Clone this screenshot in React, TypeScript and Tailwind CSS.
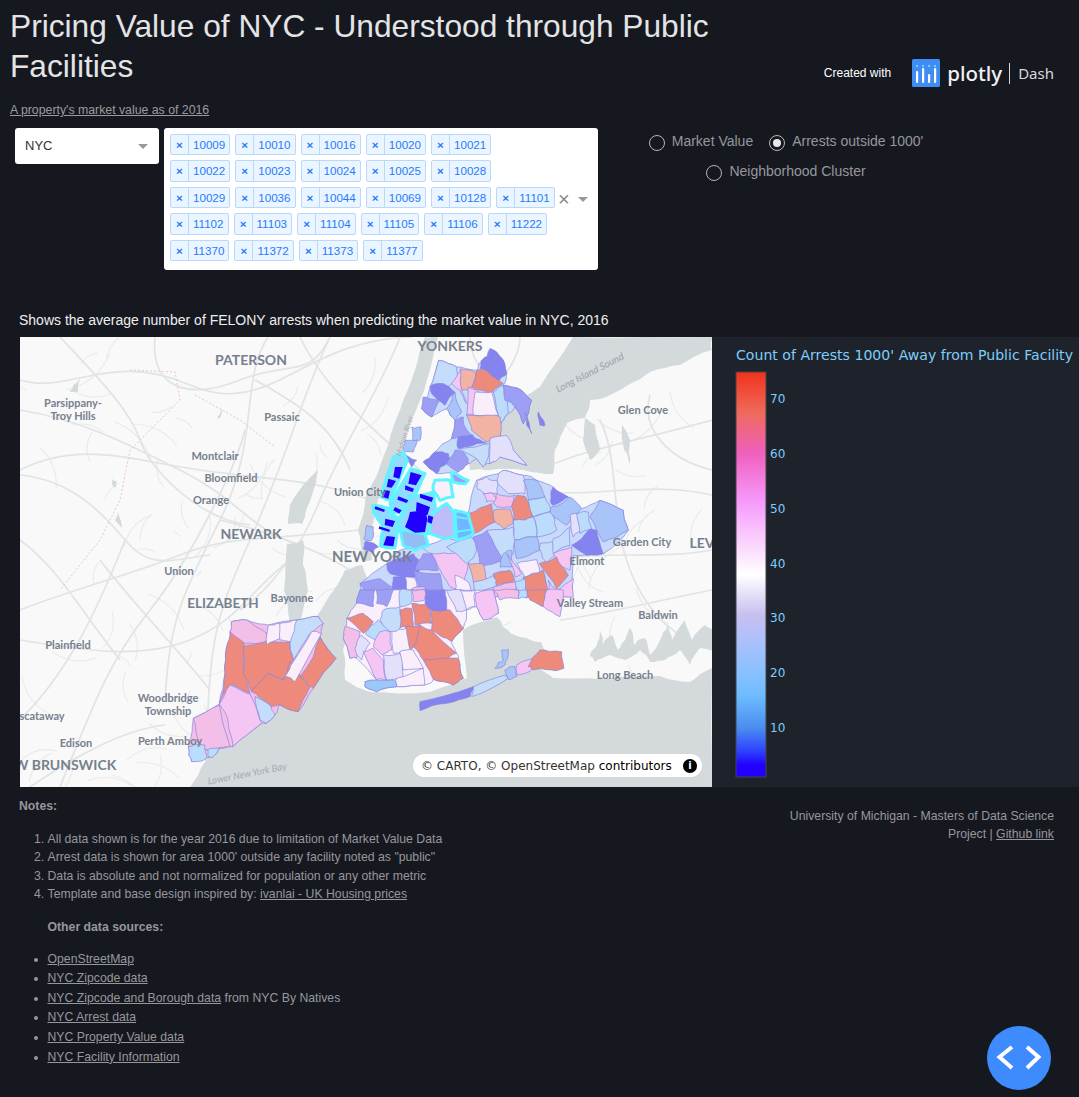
const SANS = "font-['Liberation_Sans',Arial,sans-serif]";

const chipRows = [
  ["10009", "10010", "10016", "10020", "10021"],
  ["10022", "10023", "10024", "10025", "10028"],
  ["10029", "10036", "10044", "10069", "10128", "11101"],
  ["11102", "11103", "11104", "11105", "11106", "11222"],
  ["11370", "11372", "11373", "11377"],
];

const R = "#ee8a7c";
const O = "#f2b2a4";
const P = "#f5c6f3";
const K = "#f3bfe8";
const W = "#f9eefa";
const V = "#e2e0fa";
const S = "#bcdcfb";
const L = "#c6dcfb";
const M = "#a9c4f8";
const B = "#9c9ff3";
const D = "#8583ef";
const Y = "#6fb6ff";

// zones read off the crops, in 3x coordinates
const northZones: [string, string][] = [
  [L, "296,70 350,90 410,100 425,70 450,35 482,60 500,110 490,145 545,160 575,190 550,260 525,210 505,230 480,265 480,300 520,340 560,385 480,360 450,380 430,390 410,365 385,380 355,405 290,410 250,375 285,345 335,305 345,250 320,215 275,240 245,215 270,150"],
  ["#c9d9fb", "385,530 410,430 475,410 495,400 550,415 590,430 640,450 685,480 725,515 780,490 850,520 865,580 790,650 700,655 695,780 60,780 60,740 140,680 180,640 265,625 345,600 400,590"],
  [L, "296,70 350,90 355,145 335,140 290,160 270,150"],
  [O, "362,95 408,108 395,150 365,160"],
  [P, "335,140 362,100 365,160 380,200 360,160"],
  [D, "425,70 440,60 450,35 482,60 500,110 475,135 440,100 420,95"],
  [R, "410,100 440,100 490,140 450,170 395,150"],
  [D, "270,150 310,140 345,165 315,205 275,170"],
  [B, "250,180 300,190 275,240 245,215"],
  [M, "345,165 365,225 345,250 320,215"],
  [P, "385,150 415,160 400,235 380,235"],
  [W, "405,165 455,165 475,235 400,235"],
  [S, "460,165 490,145 505,230 480,265 475,235"],
  [B, "490,145 545,160 575,190 550,260 525,210 495,190"],
  [D, "555,225 575,290 560,265"],
  [D, "595,225 615,265 600,265"],
  [O, "380,235 455,235 480,240 480,300 440,315 395,280"],
  [B, "345,250 370,240 375,270 400,295 355,300 335,305"],
  [D, "355,300 400,298 440,318 380,330 355,335"],
  [L, "360,335 450,320 445,360 430,390 410,365"],
  [V, "450,305 500,295 520,340 560,385 480,360 450,380"],
  [B, "320,370 345,340 375,350 385,380 355,405 325,385"],
  [D, "250,375 285,345 325,350 320,380 290,410"],
  [M, "215,270 243,270 240,310 220,315"],
  [M, "195,310 232,310 220,345 190,345"],
  [D, "190,345 230,370 215,390"],
  [M, "80,565 100,570 95,610 72,605"],
  [D, "78,612 115,630 100,648 70,635"],
  [V, "410,430 440,420 475,435 470,470 435,470 410,450"],
  [V, "475,410 495,400 550,415 555,470 505,470 475,440"],
  [P, "430,470 460,470 470,495 440,495"],
  [K, "470,470 525,475 515,510 470,510 460,500"],
  [R, "385,530 455,500 465,555 400,590"],
  [O, "460,520 510,515 520,560 490,575 465,555"],
  [R, "530,475 555,478 580,540 520,550 515,510"],
  [M, "550,430 590,430 615,480 565,490"],
  [S, "565,490 615,480 635,520 580,540"],
  [D, "640,450 685,480 640,505 632,490"],
  [M, "635,510 690,480 725,515 680,565 650,545 630,530"],
  [S, "580,540 630,525 645,550 650,580 590,600"],
  [S, "520,550 580,540 590,600 520,610"],
  [M, "520,610 590,600 600,640 530,665"],
  [L, "600,620 640,615 650,650 620,680 605,650"],
  [L, "640,605 690,570 690,625 640,650"],
  [V, "690,535 715,530 725,580 700,600"],
  [S, "710,530 745,525 755,575 720,590"],
  [M, "750,540 780,490 850,520 865,580 790,615"],
  [D, "695,625 745,580 770,580 790,650 740,655"],
  [P, "640,650 695,630 690,700 650,680"],
  [R, "598,680 650,660 685,715 650,755"],
  [R, "550,720 610,700 625,780 550,780"],
  [P, "625,730 650,760 700,725 700,780 630,780"],
  [B, "400,600 445,580 490,670 420,690"],
  [L, "440,580 520,570 520,650 490,670"],
  [M, "490,650 515,640 515,690 480,690"],
  [P, "270,650 395,630 385,680 370,770 330,750 290,680"],
  [L, "245,630 320,600 380,620 340,650 275,650"],
  [S, "320,630 395,600 410,640 380,680"],
  [O, "385,680 430,680 440,730 400,735"],
  [R, "460,710 510,700 525,730 470,745"],
  [P, "500,650 545,710 525,720"],
  [W, "530,680 590,668 600,705 555,720"],
  [L, "400,735 460,715 470,750 410,770"],
  [K, "460,750 530,735 530,780 460,780"],
  [S, "525,735 555,725 560,780 530,780"],
  [W, "345,715 385,735 400,780 345,780"],
  [D, "140,680 220,650 250,680 225,720 150,710"],
  [B, "60,740 120,725 170,760 170,780 90,780"],
  [D, "160,720 210,720 225,780 160,780"],
  [B, "220,700 300,710 310,760 240,780"],
  [B, "250,650 275,650 295,700 225,700"],
  [W, "195,720 225,725 230,760 200,760"],
  [K, "215,755 255,750 260,780 215,780"],
];

const southZones: [string, string][] = [
  [K, "150,125 155,95 200,90 265,105 350,90 415,80 430,100 420,140 468,205 400,295 355,365 300,345 285,375 260,400 245,400 158,470 120,475 100,500 35,515 25,470 40,385 118,342 135,250 140,170"],
  [W, "500,85 530,40 540,0 940,0 955,70 910,90 890,50 860,60 850,115 815,155 830,190 835,205 850,265 820,285 760,268 735,285 650,290 590,305 555,290 555,275 590,270 530,205 510,205 490,145"],
  [R, "150,125 190,150 190,215 210,310 150,282 118,338 135,250 140,170"],
  [R, "190,170 250,155 330,155 340,210 310,270 265,250 215,305 190,250"],
  [R, "215,305 265,250 310,270 330,215 390,290 355,365 300,345 270,350 235,320"],
  [R, "420,140 468,205 400,295 360,262 400,200"],
  [P, "150,285 210,312 245,400 158,470 145,400 118,342"],
  [K, "40,385 118,345 150,470 80,480 60,460"],
  [K, "155,95 200,90 260,130 255,155 195,160 150,125"],
  [W, "265,105 300,100 300,145 260,165"],
  [W, "300,100 350,90 355,150 330,155 300,150"],
  [L, "350,90 415,80 430,100 390,130 340,210 330,160"],
  [W, "395,125 425,130 345,275 315,260 340,215"],
  [L, "225,320 270,345 285,375 260,400 240,390"],
  [S, "25,470 75,465 80,505 35,515"],
  [S, "80,480 120,475 100,500 85,500"],
  [R, "500,85 550,70 580,95 550,130"],
  [S, "595,90 630,120 590,155 555,130"],
  [R, "660,60 695,55 700,110 655,115"],
  [R, "695,40 750,40 755,100 705,105"],
  [R, "755,60 810,60 850,115 815,155 755,120"],
  [D, "733,0 795,0 800,60 755,60 735,40"],
  [R, "675,110 720,105 725,130 690,180"],
  [R, "720,105 755,120 830,190 800,205 730,210 700,170"],
  [R, "730,210 835,205 850,265 820,285 760,268"],
  [K, "495,110 540,125 530,205 510,205 490,145"],
  [V, "545,135 570,160 545,210 525,175"],
  [P, "600,125 630,125 635,180 605,195 580,170"],
  [W, "635,115 680,115 690,180 640,190"],
  [W, "660,185 700,180 730,235 670,240"],
  [V, "610,195 660,190 670,260 620,270"],
  [P, "550,185 580,175 610,210 618,270 590,270"],
  [W, "650,265 730,235 735,285 650,290"],
  ["#9ac8f8", "555,275 640,270 650,290 590,305 555,290"],
  [D, "720,335 880,290 870,320 800,340 720,362"],
  [L, "880,290 975,255 985,265 875,320"],
  [M, "975,240 1005,230 1010,260 985,268"],
  [P, "1010,225 1060,205 1055,240 1010,255"],
  [R, "1045,230 1080,180 1145,185 1152,235 1115,240 1060,240"],
  [M, "965,180 985,178 975,225 945,235 970,210"],
  [B, "540,0 585,0 580,50 530,40"],
  [B, "590,0 640,0 620,50 590,40"],
  [L, "610,60 660,50 660,115 630,125 600,90"],
  [K, "695,0 735,0 735,30 700,35"],
  [S, "660,0 695,0 695,35 660,50"],
  [V, "800,0 850,0 860,60 830,65"],
  [W, "840,0 885,0 885,50 860,60"],
  [P, "885,10 940,0 955,70 910,90 890,50"],
  [K, "940,0 1015,0 1015,25 960,30"],
  [S, "1015,0 1040,0 1040,25 1015,25"],
  [R, "1040,0 1100,0 1090,50 1050,30"],
  [P, "1100,0 1150,0 1140,80 1090,50"],
];

const blueBlocks = [
  "165,390 188,390 178,425 160,420",
  "145,425 168,432 155,452 140,450",
  "132,458 150,462 145,485 128,480",
  "212,405 245,415 228,445 205,440",
  "196,445 222,455 218,465 195,458",
  "175,478 205,490 200,498 172,488",
  "165,510 185,520 178,530 160,520",
  "106,508 135,518 132,525 104,516",
  "136,545 165,552 158,570 134,564",
  "118,568 150,578 148,585 116,575",
  "140,597 165,600 160,628 130,625",
  "240,470 280,482 275,495 240,482",
  "230,495 270,510 262,535 228,522",
  "210,525 255,520 262,545 255,585 225,587 195,570 205,545",
  "265,535 280,540 275,560 262,555",
];

const cyanZones: [string, string][] = [
  ["#8edbff", "160,360 190,345 202,370 150,490 122,478"],
  ["#8edbff", "212,395 255,410 205,510 160,530 150,500"],
  ["#8edbff", "98,505 150,515 150,535 180,545 165,632 122,628 130,570 100,525"],
  ["#8edbff", "210,480 280,465 290,525 265,590 190,585 170,560"],
  [W, "285,430 330,430 340,480 300,490 280,460"],
  ["#93bdf6", "180,580 255,590 265,625 225,640 190,625"],
  ["#bdbdfa", "270,540 320,500 345,530 345,595 310,605 270,590"],
  [Y, "345,520 385,530 400,590 350,610"],
  [B, "335,405 385,430 375,440 340,435"],
];

// water in page coordinates
const waterAreas = [
  "573,337 712,337 712,350 680,365 650,372 628,385 610,395 590,400 585,418 567,423 555,450 553,474 523,470 490,470 470,470 462,440 480,420 527,395 540,387",
  "585,418 595,425 600,450 590,460 583,440",
  "622,425 630,440 630,464 624,450",
  "425,337 438,337 430,370 418,405 405,440 392,470 378,500 370,530 372,560 362,560 358,530 366,495 384,455 400,410 415,370",
  "712,668 690,682 660,676 600,679 553,678 535,665 545,650 540,642 520,637 503,627 497,617 463,630 467,678 430,692 370,692 345,680 343,650 355,622 372,595 362,565 345,570 330,595 312,625 315,665 270,712 220,738 205,762 190,787 712,787",
  "590,655 597,645 600,630 603,645 612,635 618,650 625,640 630,628 634,645 645,638 650,655 660,640 668,625 672,640 685,620 692,640 705,625 712,630 712,650 700,648 690,665 680,650 665,660 650,662 640,650 625,660 610,655 595,662",
  "287,544 303,540 303,565 308,590 300,625 290,622 284,590",
  "290,505 304,484 318,470 312,495 302,524 288,524",
  "70,392 80,378 78,392",
  "113,486 112,478 117,482 116,490",
  "115,520 118,512 122,528",
  "215,420 222,408 220,418",
];

// breaks a straight edge into small steps; the step depends only on the edge,
// so two zones sharing an edge stay together
function roughen(points: string, amount: number) {
  let pts = points.split(" ").map((p) => p.split(",").map(Number));
  let size = amount;
  for (let level = 0; level < 2; level++) {
    const out: number[][] = [];
    pts.forEach((a, i) => {
      const b = pts[(i + 1) % pts.length];
      const mx = (a[0] + b[0]) / 2;
      const my = (a[1] + b[1]) / 2;
      const h = Math.sin(mx * 12.9898 + my * 78.233) * 43758.5453;
      const f = h - Math.floor(h);
      const g = f * 7 - Math.floor(f * 7);
      out.push(a, [mx + (f - 0.5) * size, my + (g - 0.5) * size]);
    });
    pts = out;
    size /= 2;
  }
  return pts.map((p) => `${p[0].toFixed(1)},${p[1].toFixed(1)}`).join(" ");
}

// background road net: a few main roads by hand, the rest a fixed pseudo-random texture
const mainRoads = [
  "M20 380 C70 395 110 350 190 385 S 300 340 412 337",
  "M20 470 C80 440 130 460 200 470 S 320 480 370 500",
  "M20 410 C80 420 120 440 180 470 S 250 530 300 545",
  "M20 475 C70 480 100 510 125 540 S 170 560 210 555",
  "M60 337 C100 380 130 410 140 440 S 200 520 250 525",
  "M20 720 C60 680 90 630 125 540",
  "M20 610 C70 590 130 575 180 555 S 270 540 360 530",
  "M155 337 C150 390 190 400 240 380 S 310 380 330 337",
  "M245 430 C235 470 190 560 150 610 S 95 700 60 787",
  "M268 337 C240 380 260 440 220 520 S 170 620 165 700",
  "M330 337 C300 400 290 450 250 540 S 210 640 205 787",
  "M400 337 C385 380 340 450 320 500 S 270 590 240 610",
  "M20 640 C80 650 140 660 190 640 S 250 590 290 560",
  "M30 787 C70 760 120 730 165 725",
  "M300 337 C320 380 360 420 420 470",
  "M255 380 C290 400 330 420 350 470",
  "M220 520 C260 530 310 545 350 570",
  "M100 560 C130 600 170 640 210 690",
  "M20 540 C60 570 80 610 120 660",
  "M540 470 C580 450 640 440 712 420",
  "M520 490 C590 500 650 480 712 495",
  "M600 420 C620 460 610 520 630 570 S 680 640 712 650",
  "M560 620 C600 615 660 600 712 590",
  "M650 395 C640 430 670 460 712 470",
  "M560 560 C600 550 660 560 712 550",
  "M470 337 C470 370 500 390 540 400",
  "M520 337 C520 360 500 380 490 395",
];

function buildSideRoads() {
  let seed = 41;
  const next = (range: number) => {
    seed = (seed * 1103515245 + 12345) % 2147483648;
    return (seed / 2147483648) * range;
  };
  const out: string[] = [];
  for (let i = 0; i < 110; i++) {
    const rightSide = i % 4 === 0;
    const x = rightSide ? 500 + next(212) : 20 + next(370);
    const y = rightSide ? 400 + next(280) : 337 + next(450);
    const dx = next(90) - 45;
    const dy = next(90) - 45;
    out.push(`M${x.toFixed(0)} ${y.toFixed(0)} q${(dx / 2 + dy / 4).toFixed(0)} ${(dy / 2 - dx / 4).toFixed(0)} ${dx.toFixed(0)} ${dy.toFixed(0)}`);
  }
  return out;
}

const sideRoads = buildSideRoads();

const smallLabels: [string, number, number][] = [
  ["Parsippany-", 73, 407],
  ["Troy Hills", 73, 420],
  ["Passaic", 282, 421],
  ["Montclair", 215, 460],
  ["Bloomfield", 231, 482],
  ["Orange", 211, 504],
  ["Union City", 360, 496],
  ["Union", 179, 575],
  ["Bayonne", 292, 602],
  ["Plainfield", 68, 649],
  ["Woodbridge", 168, 702],
  ["Township", 168, 715],
  ["scataway", 42, 720],
  ["Edison", 76, 747],
  ["Perth Amboy", 170, 745],
  ["Glen Cove", 643, 414],
  ["Garden City", 642, 546],
  ["Elmont", 587, 565],
  ["Valley Stream", 590, 607],
  ["Baldwin", 658, 619],
  ["Long Beach", 625, 679],
];

const bigLabels: [string, number, number, number][] = [
  ["YONKERS", 450, 351, 14],
  ["PATERSON", 251, 365, 14],
  ["NEWARK", 251, 539, 14],
  ["NEW YORK", 372, 562, 15],
  ["ELIZABETH", 223, 608, 13.5],
  ["W BRUNSWICK", 65, 770, 14],
  ["LEV", 702, 548, 14],
];

function Poly({ fill, points, stroke = "#8484dc", width = 2, rough = 9 }: { fill: string; points: string; stroke?: string; width?: number; rough?: number }) {
  return <polygon points={roughen(points, rough)} fill={fill} stroke={stroke} strokeWidth={width} strokeLinejoin="round" />;
}

function MapDrawing() {
  return (
    <svg viewBox="20 337 692 450" className="block h-[450px] w-[692px]">
      <rect x="20" y="337" width="692" height="450" fill="#f8f9f8" />
      <g fill="none" stroke="#e9ebeb" strokeWidth="1.1">
        {sideRoads.map((d, i) => (
          <path key={i} d={d} />
        ))}
      </g>
      <g fill="none" stroke="#e1e3e4" strokeWidth="1.7">
        {mainRoads.map((d) => (
          <path key={d} d={d} />
        ))}
      </g>
      <g fill="#d4d9dc">
        {waterAreas.map((points) => (
          <polygon key={points} points={roughen(points, 3)} />
        ))}
      </g>
      <path d="M130 370 L175 372 L180 400 L130 450 L120 500 L100 540 L60 590" fill="none" stroke="#eec4c4" strokeDasharray="2 2" />
      <path d="M195 395 L240 420 L275 447" fill="none" stroke="#eec4c4" strokeDasharray="2 2" />
      <g transform="translate(340 337) scale(.3333)">
        {northZones.map(([fill, points]) => (
          <Poly key={points} fill={fill} points={points} />
        ))}
        {cyanZones.map(([fill, points]) => (
          <Poly key={points} fill={fill} points={points} stroke="#5ff3ff" width={9} rough={5} />
        ))}
        {blueBlocks.map((points) => (
          <polygon key={points} points={points} fill="#2200ff" />
        ))}
        <path d="M335 538 L382 545 M345 585 L392 578" stroke="#5ff3ff" strokeWidth="6" />
      </g>
      <g transform="translate(180 590) scale(.3333)">
        {southZones.map(([fill, points]) => (
          <Poly key={points} fill={fill} points={points} />
        ))}
      </g>
      <g fill="#76808e" fontFamily="Lato, sans-serif" fontWeight="700" textAnchor="middle">
        {smallLabels.map(([label, x, y]) => (
          <text key={label} x={x} y={y} fontSize="11">
            {label}
          </text>
        ))}
        {bigLabels.map(([label, x, y, size]) => (
          <text key={label} x={x} y={y} fontSize={size}>
            {label}
          </text>
        ))}
        <text x="590" y="376" fontSize="10" fontStyle="italic" fontWeight="400" fill="#9aa3aa" transform="rotate(-27 590 373)">
          Long Island Sound
        </text>
        <text x="247" y="777" fontSize="9.5" fontStyle="italic" fontWeight="400" fill="#a3abb0" transform="rotate(-11 247 773)">
          Lower New York Bay
        </text>
        <text x="405" y="438" fontSize="7.5" fontStyle="italic" fontWeight="400" fill="#a3abb0" transform="rotate(-72 405 436)">
          Hudson River
        </text>
      </g>
    </svg>
  );
}

function ColorBar() {
  const ticks = [
    ["70", 403],
    ["60", 458],
    ["50", 513],
    ["40", 568],
    ["30", 622],
    ["20", 677],
    ["10", 732],
  ] as const;
  return (
    <svg viewBox="712 337 367 450" className="block h-[450px] w-[367px]">
      <defs>
        <linearGradient id="bar" x1="0" y1="0" x2="0" y2="1">
          <stop offset="0" stopColor="#f2321b" />
          <stop offset="0.1" stopColor="#ef6a5c" />
          <stop offset="0.2" stopColor="#f05fbc" />
          <stop offset="0.32" stopColor="#f59afc" />
          <stop offset="0.5" stopColor="#ffffff" />
          <stop offset="0.6" stopColor="#c8bff0" />
          <stop offset="0.66" stopColor="#aec0fb" />
          <stop offset="0.74" stopColor="#8ac0ff" />
          <stop offset="0.8" stopColor="#6dbcff" />
          <stop offset="0.88" stopColor="#4a8cf0" />
          <stop offset="0.94" stopColor="#2b3cff" />
          <stop offset="0.97" stopColor="#2200ff" />
          <stop offset="1" stopColor="#2200ff" />
        </linearGradient>
      </defs>
      <text x="736" y="360" fill="#7fcdfb" fontSize="14.1" fontFamily="'DejaVu Sans', sans-serif">
        Count of Arrests 1000' Away from Public Facility
      </text>
      <rect x="736" y="372" width="30" height="405" fill="url(#bar)" stroke="#444" />
      {ticks.map(([label, y]) => (
        <text key={label} x="770" y={y} fill="#7fcdfb" fontSize="12" fontFamily="'DejaVu Sans', sans-serif">
          {label}
        </text>
      ))}
    </svg>
  );
}

function PlotlyLogo() {
  const bars = [
    [4, 12],
    [10, 15],
    [16, 9],
    [22, 15],
  ];
  return (
    <svg viewBox="0 0 28 28" className="h-7 w-7">
      <rect width="28" height="28" rx="1.5" fill="#3f8cf5" />
      {bars.map(([x, h]) => (
        <g key={x}>
          <circle cx={x + 1} cy="7" r="1.1" fill="#7fe3ff" />
          <rect x={x} y={24 - h} width="2.2" height={h} rx="1" fill="#fff" />
        </g>
      ))}
    </svg>
  );
}

function Radio({ label, checked = false }: { label: string; checked?: boolean }) {
  return (
    <span className="mx-[8px] inline-flex items-center gap-[7px] whitespace-nowrap text-[14px] text-[#96979c]">
      <span className="flex h-4 w-4 shrink-0 translate-y-[1px] items-center justify-center rounded-full border border-[#b5b5b8]">
        {checked && <span className="h-2 w-2 rounded-full bg-[#e8e8ea]" />}
      </span>
      {label}
    </span>
  );
}

export default function App() {
  return (
    <div className={`relative min-h-[1097px] w-full overflow-hidden bg-[#161820] ${SANS}`}>
      <div className="flex items-start justify-between pl-[10px] pr-[25px] pt-[6px]">
        <h1 className="w-[725px] text-[31.7px] font-normal leading-[40px] text-[#e4e4e6]">
          Pricing Value of NYC - Understood through Public Facilities
        </h1>
        <div className="mt-[53px] flex items-center">
          <span className="mr-[21px] text-[12px] text-white">Created with</span>
          <PlotlyLogo />
          <span className="ml-[7px] font-['Noto_Sans',sans-serif] text-[20.5px] font-medium leading-[28px] text-[#f1f1f3]">plotly</span>
          <span className="ml-[7px] mr-[8px] h-[21px] w-px bg-[#d8d8d8]" />
          <span className="font-['Noto_Sans',sans-serif] text-[15px] leading-[28px] text-[#d8d8da]">Dash</span>
        </div>
      </div>

      <p className="mt-[14px] pl-[10px] text-[12.3px] leading-[18px] text-[#9a9b9f] underline">A property's market value as of 2016</p>

      <div className="mt-[9px] flex items-start pl-[15px]">
        <div className="flex h-[36px] w-[144px] items-center justify-between rounded-[3px] bg-white pb-[1px] pl-[10px] pr-[11px] text-[13px] text-[#333]">
          NYC
          <span className="mt-[1px] h-0 w-0 border-x-[5px] border-t-[5px] border-x-transparent border-t-[#999]" />
        </div>

        <div className="ml-[5px] flex h-[142px] w-[434px] items-center rounded-[3px] bg-white pl-[6px] pr-[10px]">
          <div className="mb-[3px] flex w-[386px] flex-col gap-[5px]">
            {chipRows.map((row) => (
              <div key={row[0]} className="flex gap-[5px]">
                {row.map((zip) => (
                  <span key={zip} className="flex h-[21.4px] items-center rounded-[2px] border border-[#b8d9ff] bg-[#ebf5ff] text-[11.6px] text-[#1f7bff]">
                    <span className="flex h-full w-[18px] items-center justify-center border-r border-[#b8d9ff] font-bold">×</span>
                    <span className="px-[4px]">{zip}</span>
                  </span>
                ))}
              </div>
            ))}
          </div>
          <span className="ml-[2px] text-[20px] leading-none text-[#888]">×</span>
          <span className="ml-[8px] h-0 w-0 border-x-[5px] border-t-[5px] border-x-transparent border-t-[#999]" />
        </div>

        <div className="ml-[43px] flex w-[290px] flex-col items-center gap-[9px] pt-[3px]">
          <div className="flex">
            <Radio label="Market Value" />
            <Radio label="Arrests outside 1000'" checked />
          </div>
          <Radio label="Neighborhood Cluster" />
        </div>
      </div>

      <p className="mt-[41px] pl-[19px] text-[14px] leading-[18px] text-[#eeeeef]">
        Shows the average number of FELONY arrests when predicting the market value in NYC, 2016
      </p>

      <div className="mt-[8px] flex pl-[20px]">
        <div className="relative h-[450px] w-[692px]">
          <MapDrawing />
          <div className="absolute bottom-[10px] right-[10px] flex h-[23px] w-[289px] items-center justify-between rounded-[12px] bg-white pl-[8px] pr-[5px] font-['DejaVu_Sans',sans-serif] text-[12px] text-[#333]">
            <span>
              © CARTO, © OpenStreetMap <span className="text-black">contributors</span>
            </span>
            <span className="flex h-[14px] w-[14px] items-center justify-center rounded-full bg-black text-[10px] font-bold leading-none text-white">i</span>
          </div>
        </div>
        <div className="flex-1 bg-[#1e232b]">
          <ColorBar />
        </div>
      </div>

      <div className="flex justify-between pl-[19px] pr-[25px] text-[12.25px] text-[#96979c]">
        <div className="pt-[10px]">
          <p className="font-bold leading-[18px]">Notes:</p>
          <ol className="ml-[28.5px] mt-[15px] list-decimal leading-[18.4px]">
            <li>All data shown is for the year 2016 due to limitation of Market Value Data</li>
            <li>Arrest data is shown for area 1000' outside any facility noted as "public"</li>
            <li>Data is absolute and not normalized for population or any other metric</li>
            <li>
              Template and base design inspired by: <a className="underline">ivanlai - UK Housing prices</a>
            </li>
          </ol>
          <p className="ml-[28.5px] mt-[14px] font-bold leading-[18px]">Other data sources:</p>
          <ul className="ml-[28.5px] mt-[14px] list-disc leading-[19.6px]">
            <li>
              <a className="underline">OpenStreetMap</a>
            </li>
            <li>
              <a className="underline">NYC Zipcode data</a>
            </li>
            <li>
              <a className="underline">NYC Zipcode and Borough data</a> from NYC By Natives
            </li>
            <li>
              <a className="underline">NYC Arrest data</a>
            </li>
            <li>
              <a className="underline">NYC Property Value data</a>
            </li>
            <li>
              <a className="underline">NYC Facility Information</a>
            </li>
          </ul>
        </div>
        <div className="pt-[20px] text-right leading-[18px]">
          <p>University of Michigan - Masters of Data Science</p>
          <p>
            Project | <a className="underline">Github link</a>
          </p>
        </div>
      </div>

      <button className="absolute bottom-[7px] right-[28px] flex h-16 w-16 items-center justify-center rounded-full bg-[#3d8bfd]">
        <svg viewBox="0 0 64 64" className="h-16 w-16" fill="none" stroke="#fff" strokeWidth="4">
          <path d="M25 21 L12.500 31 L25 42" />
          <path d="M40 21 L51.500 31 L40 42" />
        </svg>
      </button>
    </div>
  );
}
